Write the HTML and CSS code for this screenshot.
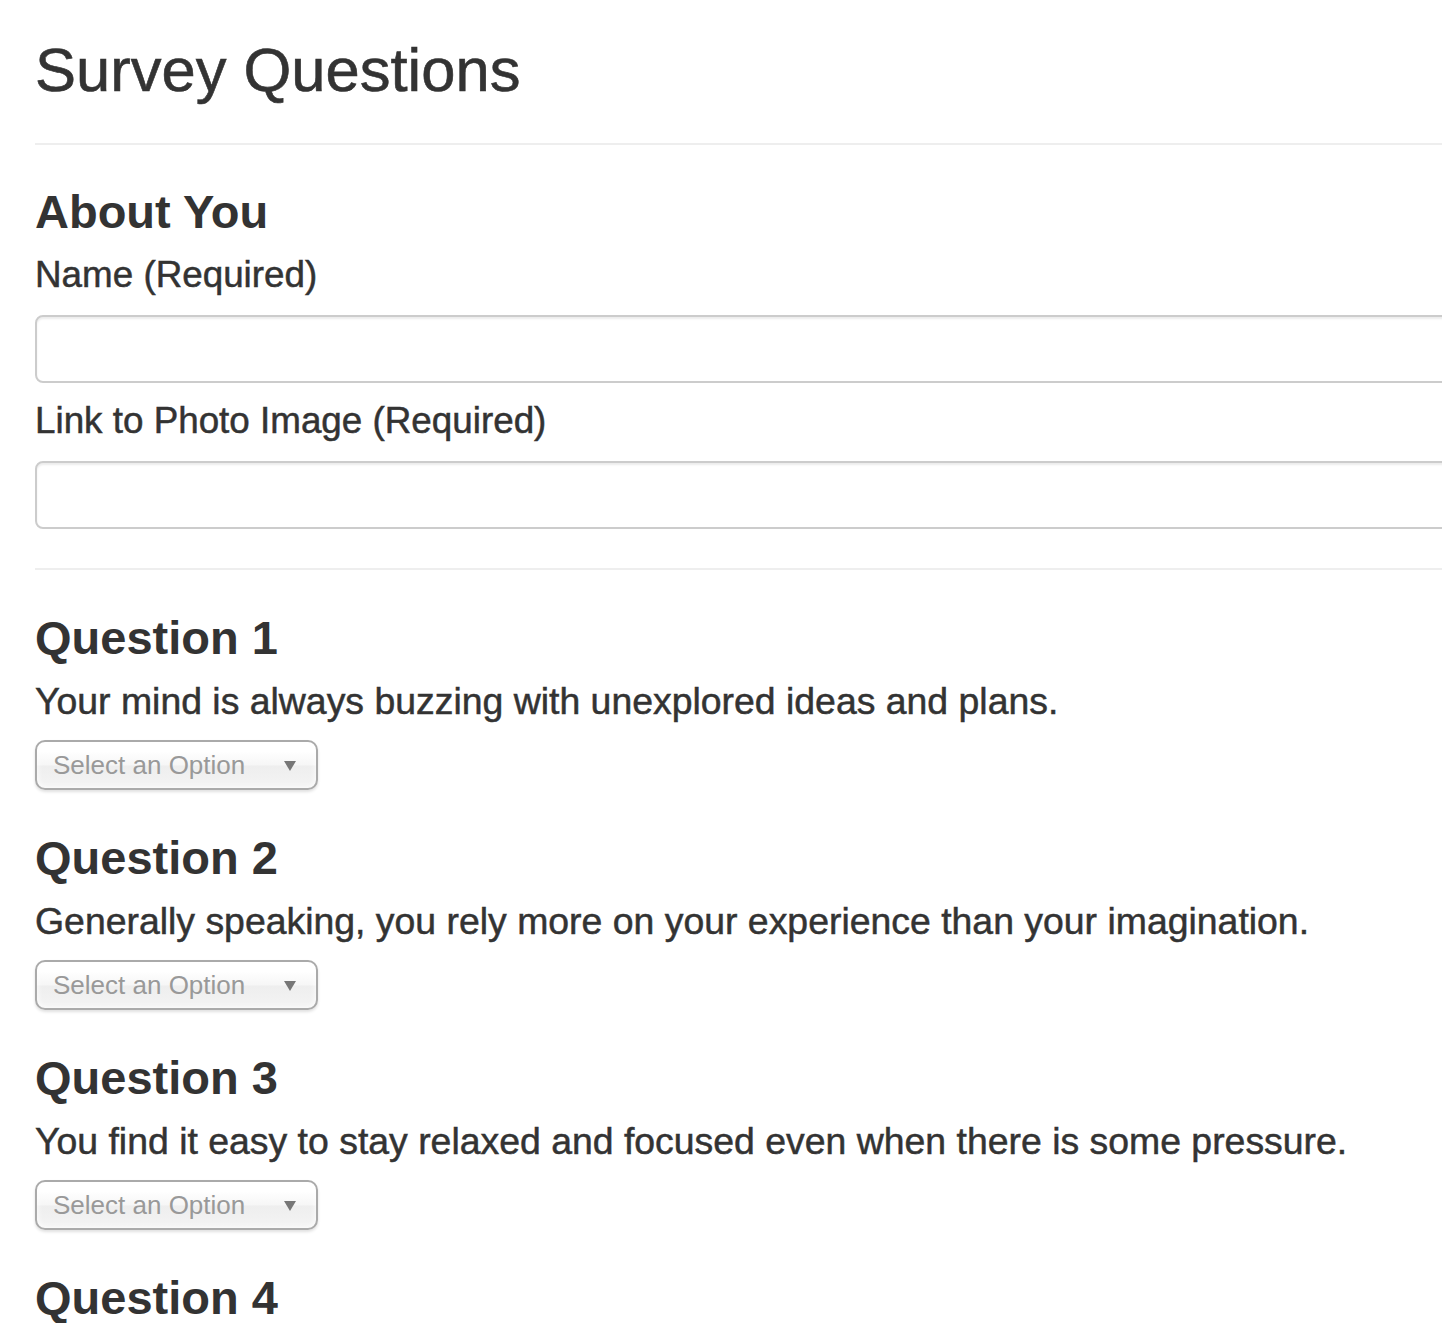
FILE: index.html
```html
<!DOCTYPE html>
<html lang="en">
<head>
<meta charset="utf-8">
<title>Survey Questions</title>
<link rel="stylesheet" href="styles.css">
</head>
<body>
<div class="page">
  <h1 class="title">Survey Questions</h1>
  <hr class="rule rule-top">
  <section class="about">
    <h2 class="section-title about-title">About You</h2>
    <div class="form-group">
      <label class="field-label">Name (Required)</label>
      <input class="text-input" type="text">
    </div>
    <div class="form-group">
      <label class="field-label">Link to Photo Image (Required)</label>
      <input class="text-input" type="text">
    </div>
  </section>
  <hr class="rule rule-mid">
  <section class="questions">
    <div class="question">
      <h2 class="section-title q-title">Question 1</h2>
      <p class="q-text">Your mind is always buzzing with unexplored ideas and plans.</p>
      <div class="chosen"><span class="chosen-text">Select an Option</span><span class="chosen-arrow"></span></div>
    </div>
    <div class="question">
      <h2 class="section-title q-title">Question 2</h2>
      <p class="q-text">Generally speaking, you rely more on your experience than your imagination.</p>
      <div class="chosen"><span class="chosen-text">Select an Option</span><span class="chosen-arrow"></span></div>
    </div>
    <div class="question">
      <h2 class="section-title q-title">Question 3</h2>
      <p class="q-text">You find it easy to stay relaxed and focused even when there is some pressure.</p>
      <div class="chosen"><span class="chosen-text">Select an Option</span><span class="chosen-arrow"></span></div>
    </div>
    <div class="question">
      <h2 class="section-title q-title">Question 4</h2>
    </div>
  </section>
</div>
</body>
</html>
```

FILE: styles.css
```css
html, body {
  margin: 0;
  padding: 0;
  background: #fff;
  overflow: hidden;
}

body {
  font-family: "Liberation Sans", Arial, Helvetica, sans-serif;
  color: #333;
}

.page {
  padding-left: 35px;
  width: 1480px;
}

.title {
  margin: 36px 0 0;
  font-size: 61.5px;
  line-height: 68px;
  font-weight: normal;
  -webkit-text-stroke: 0.6px #333;
}

.rule {
  border: 0;
  height: 2px;
  background: #eee;
  margin: 0;
}

.rule-top {
  margin-top: 39px;
}

.section-title {
  font-size: 47px;
  line-height: 50px;
  font-weight: bold;
  margin: 0;
}

.about-title {
  margin-top: 42px;
}

.form-group {
  margin-top: 18px;
}

.field-label {
  display: block;
  font-size: 36.8px;
  line-height: 40px;
  margin-bottom: 20px;
  -webkit-text-stroke: 0.5px #333;
}

.text-input {
  display: block;
  box-sizing: border-box;
  width: 100%;
  height: 68px;
  margin: 0;
  border: 2px solid #ccc;
  border-radius: 8px;
  background: #fff;
  box-shadow: inset 0 2px 2px rgba(0, 0, 0, 0.075);
  font: inherit;
}

.rule-mid {
  margin-top: 39px;
}

.question .q-title {
  margin-top: 43px;
}

.q-text {
  margin: 18px 0 0;
  font-size: 37.4px;
  line-height: 40px;
  -webkit-text-stroke: 0.5px #333;
}

.chosen {
  box-sizing: border-box;
  margin-top: 19px;
  width: 283px;
  height: 50px;
  display: flex;
  align-items: center;
  padding: 0 20px 0 16px;
  border: 2px solid #aaa;
  border-radius: 10px;
  background: linear-gradient(#fff 20%, #f6f6f6 50%, #eee 52%, #f4f4f4 100%);
  box-shadow: inset 0 0 6px #fff, 0 2px 3px rgba(0, 0, 0, 0.12);
}

.chosen-text {
  font-size: 26px;
  color: #999;
  white-space: nowrap;
}

.chosen-arrow {
  margin-left: auto;
  width: 0;
  height: 0;
  border-left: 6px solid transparent;
  border-right: 6px solid transparent;
  border-top: 10px solid #777;
  margin-top: 2px;
}
```
